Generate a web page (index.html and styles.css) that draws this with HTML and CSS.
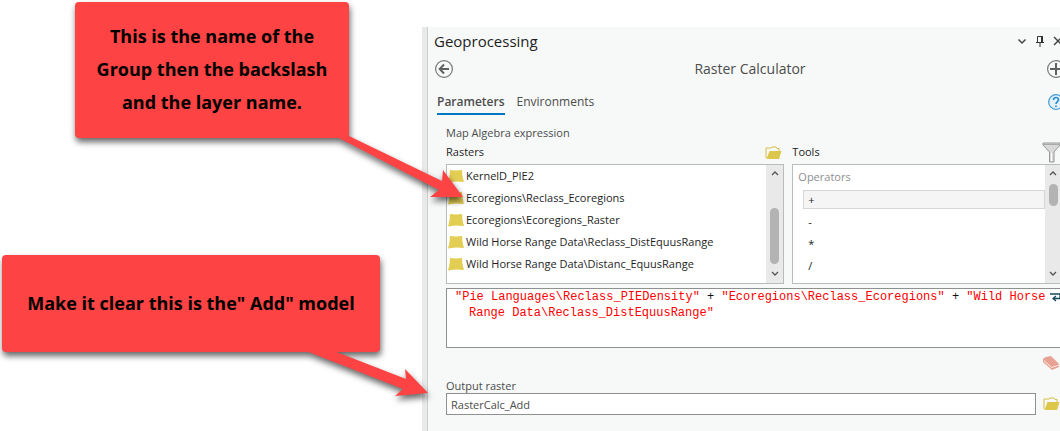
FILE: index.html
```html
<!DOCTYPE html>
<html lang="en">
<head>
<meta charset="utf-8">
<title>Geoprocessing - Raster Calculator</title>
<link rel="stylesheet" href="styles.css">
</head>
<body>
<main class="page">
  <section class="notes">
    <div class="note note-group">
      <svg class="arrow arrow-group" width="140" height="70" viewBox="0 0 140 70" aria-hidden="true"><path d="M5 6H19L112 51L113 40L133 67H100L109 60Z"/></svg>
      <p class="note-body">This is the name of the<br>Group then the backslash<br>and the layer name.</p>
    </div>
    <div class="note note-model">
      <svg class="arrow arrow-model" width="140" height="50" viewBox="0 0 140 50" aria-hidden="true"><path d="M0 0H28L100 28L99 18L122 42L89 45L97 38Z"/></svg>
      <p class="note-body">Make it clear this is the" Add" model</p>
    </div>
  </section>

  <section class="panel">
    <div class="pane">
      <header class="pane-head">
        <h1 class="pane-title">Geoprocessing</h1>
        <div class="window-tools">
          <button class="icon-btn" aria-label="Menu"><svg width="10" height="12" viewBox="0 0 10 12"><path d="M1.500 4.500L5 8L8.500 4.500" fill="none" stroke="#444" stroke-width="1.500"/></svg></button>
          <button class="icon-btn" aria-label="Pin"><svg width="10" height="12" viewBox="0 0 10 12"><path d="M2.500 7V1.500H7V7M1 7.500H9M5 8V12" fill="none" stroke="#333"/><path d="M6 1H8V7H6Z" fill="#333"/></svg></button>
          <button class="icon-btn" aria-label="Close"><svg width="10" height="12" viewBox="0 0 10 12"><path d="M1 2L9 10M9 2L1 10" stroke="#444" stroke-width="1.500"/></svg></button>
        </div>
      </header>

      <div class="tool-head">
        <button class="icon-btn" aria-label="Back"><svg width="18" height="18" viewBox="0 0 18 18"><circle cx="9" cy="9" r="8.400" fill="none" stroke="#777" stroke-width="1.200"/><path d="M14 9H5M9 4.500L4.700 9L9 13.500" fill="none" stroke="#606060" stroke-width="2"/></svg></button>
        <h2 class="tool-title">Raster Calculator</h2>
        <button class="icon-btn" aria-label="Add"><svg width="18" height="18" viewBox="0 0 18 18"><circle cx="9" cy="9" r="8.400" fill="none" stroke="#777" stroke-width="1.200"/><path d="M9 3V15M3 9H15" stroke="#606060" stroke-width="2"/></svg></button>
      </div>

      <nav class="tabs">
        <a class="tab tab-active" href="#parameters">Parameters</a>
        <a class="tab" href="#environments">Environments</a>
        <button class="icon-btn help" aria-label="Help"><svg width="16" height="16" viewBox="0 0 16 16"><circle cx="8" cy="8" r="7.300" fill="#e6f2fa" stroke="#3d9bd6" stroke-width="1.200"/><path d="M5.500 6Q5.500 3.500 8 3.500T10.500 5.800C10.500 7.500 8 7.700 8 10M8 11.500V13" fill="none" stroke="#2f90d0" stroke-width="1.700"/></svg></button>
      </nav>

      <div class="form" id="parameters">
        <h3 class="form-title">Map Algebra expression</h3>
        <div class="lists">
          <div class="list-block">
            <div class="list-head">
              <h4 class="list-title">Rasters</h4>
              <button class="icon-btn" aria-label="Browse rasters"><svg width="17" height="14" viewBox="0 0 17 14"><path d="M1 12V2H6L7 1H11L12 2.500H14V5" fill="none" stroke="#d6bd43"/><path d="M4.500 5H16.500L14 13H1.500Z" fill="#dcc64c"/></svg></button>
            </div>
            <div class="list">
              <ul class="rows">
                <li class="row"><svg width="16" height="14" viewBox="0 0 16 14"><path d="M2 1L8 1.500L14 1L14.500 7L16 13L8 12.500L0 13.500L1.500 7Z" fill="#e3ce54"/></svg>KernelD_PIE2</li>
                <li class="row"><svg width="16" height="14" viewBox="0 0 16 14"><path d="M2 1L8 1.500L14 1L14.500 7L16 13L8 12.500L0 13.500L1.500 7Z" fill="#e3ce54"/></svg>Ecoregions\Reclass_Ecoregions</li>
                <li class="row"><svg width="16" height="14" viewBox="0 0 16 14"><path d="M2 1L8 1.500L14 1L14.500 7L16 13L8 12.500L0 13.500L1.500 7Z" fill="#e3ce54"/></svg>Ecoregions\Ecoregions_Raster</li>
                <li class="row"><svg width="16" height="14" viewBox="0 0 16 14"><path d="M2 1L8 1.500L14 1L14.500 7L16 13L8 12.500L0 13.500L1.500 7Z" fill="#e3ce54"/></svg>Wild Horse Range Data\Reclass_DistEquusRange</li>
                <li class="row"><svg width="16" height="14" viewBox="0 0 16 14"><path d="M2 1L8 1.500L14 1L14.500 7L16 13L8 12.500L0 13.500L1.500 7Z" fill="#e3ce54"/></svg>Wild Horse Range Data\Distanc_EquusRange</li>
              </ul>
              <div class="scroll scroll-low">
                <svg width="8" height="6" viewBox="0 0 8 6"><path d="M1 5L4 2L7 5" fill="none" stroke="#555" stroke-width="1.300"/></svg>
                <span class="thumb"></span>
                <svg width="8" height="6" viewBox="0 0 8 6"><path d="M1 1L4 4L7 1" fill="none" stroke="#555" stroke-width="1.300"/></svg>
              </div>
            </div>
          </div>

          <div class="list-block">
            <div class="list-head">
              <h4 class="list-title">Tools</h4>
              <button class="icon-btn" aria-label="Filter tools"><svg width="19" height="21" viewBox="0 0 19 21"><path d="M1 1H18V3L12 10V20H7.500V10L1 3Z" fill="#d9d9d9" stroke="#999"/><path d="M1 2.500H18" stroke="#aaa"/><path d="M9.500 11V19" stroke="#fff"/></svg></button>
            </div>
            <div class="list">
              <div class="tools">
                <p class="tools-title">Operators</p>
                <ul class="ops">
                  <li class="op op-on">+</li>
                  <li class="op">-</li>
                  <li class="op">*</li>
                  <li class="op">/</li>
                </ul>
              </div>
              <div class="scroll scroll-high">
                <svg width="8" height="6" viewBox="0 0 8 6"><path d="M1 5L4 2L7 5" fill="none" stroke="#555" stroke-width="1.300"/></svg>
                <span class="thumb"></span>
                <svg width="8" height="6" viewBox="0 0 8 6"><path d="M1 1L4 4L7 1" fill="none" stroke="#555" stroke-width="1.300"/></svg>
              </div>
            </div>
          </div>
        </div>

        <div class="expression">
          <div class="code" role="textbox" aria-label="Expression" contenteditable="true"><div class="code-line"><span>"Pie Languages\Reclass_PIEDensity"</span> <span class="plus">+</span> <span>"Ecoregions\Reclass_Ecoregions"</span> <span class="plus">+</span> <span>"Wild Horse</span></div><div class="code-line code-wrap">Range Data\Reclass_DistEquusRange"</div></div>
          <button class="icon-btn" aria-label="Wrap"><svg width="12" height="10" viewBox="0 0 12 10"><path d="M0 2H10V6.500H3M6 4L3 6.500L6 9" fill="none" stroke="#17495a" stroke-width="1.300"/></svg></button>
        </div>
        <div class="clear">
          <button class="icon-btn" aria-label="Clear"><svg width="17" height="14" viewBox="0 0 17 14"><path d="M0 3Q1 1 8 0L16 8V11L9 14L0 6Z" fill="#e7a293"/><path d="M1 4.500L8.500 11.500L16 9" fill="none" stroke="#fff" stroke-width="0.800"/></svg></button>
        </div>
        <label class="out-label" for="out">Output raster</label>
        <div class="out-row">
          <input class="out" id="out" type="text" value="RasterCalc_Add">
          <button class="icon-btn" aria-label="Browse output"><svg width="17" height="14" viewBox="0 0 17 14"><path d="M1 12V2H6L7 1H11L12 2.500H14V5" fill="none" stroke="#d6bd43"/><path d="M4.500 5H16.500L14 13H1.500Z" fill="#dcc64c"/></svg></button>
        </div>
      </div>
    </div>
  </section>
</main>
</body>
</html>
```
FILE: styles.css
```css
* { box-sizing: border-box; }
body { margin: 0; background: #fff; font: 11px/16px "Open Sans", "Noto Sans", sans-serif; color: #1e1e1e; }
h1, h2, h3, h4, p, ul { margin: 0; padding: 0; font-weight: 400; }
ul { list-style: none; }
svg { display: block; flex: none; }
.page { display: flex; min-height: 100vh; overflow: hidden; }

.notes { flex: none; width: 422px; padding: 2px; display: flex; flex-direction: column; gap: 117px; z-index: 1; }
.note { position: relative; filter: drop-shadow(1px 4px 3px rgba(0, 0, 0, 0.6)); }
.note-group { margin: 0 71px 0 73px; }
.note-model { margin-right: 40px; }
.note-body { display: grid; place-content: center; border-radius: 4px; background: #fd4343; color: #000; text-align: center; font: 700 18px/33px "Open Sans", "Noto Sans", sans-serif; white-space: nowrap; }
.note-group .note-body { padding: 18px 0 19px; }
.note-model .note-body { padding: 32px 0; }
.arrow { position: absolute; fill: #fd4343; }
.arrow-group { left: 255px; top: 128px; }
.arrow-model { left: 304px; top: 96px; }

.panel { flex: 1; min-width: 0; margin-top: 27px; padding-left: 5px; background: #f7f9f8; box-shadow: inset 5px 0 #e9e9e9, inset 6px 0 #ccd0ce; }
.pane { margin-right: -7px; padding-left: 7px; }
.icon-btn { flex: none; padding: 0; border: 0; background: none; cursor: pointer; }

.pane-head { display: flex; justify-content: space-between; align-items: center; height: 28px; }
.pane-title { font-size: 15px; line-height: 20px; }
.window-tools { display: flex; gap: 8px; padding-right: 4px; }
.tool-head { display: flex; justify-content: space-between; align-items: center; height: 28px; padding: 0 2px 0 1px; }
.tool-title { font-size: 14px; line-height: 20px; color: #4c4c4c; }
.tabs { display: flex; align-items: flex-start; gap: 12px; margin-top: 10px; padding: 0 3px; }
.tab { padding-bottom: 2px; font-size: 12px; line-height: 18px; color: #4c4c4c; text-decoration: none; border-bottom: 2px solid transparent; }
.tab-active { font-weight: 600; border-color: #0079c1; }
.help { margin-left: auto; padding-top: 1px; }

.form { padding: 10px 4px 0 12px; }
.form-title { font-size: 11px; color: #4c4c4c; }
.lists { display: grid; grid-template-columns: 5fr 4fr; gap: 8px; }
.list-block { min-width: 0; }
.list-head { display: flex; justify-content: space-between; align-items: center; height: 23px; padding-right: 2px; }
.list-title { font-size: 11px; line-height: 14px; padding-bottom: 2px; }
.list { display: flex; height: 120px; border: 1px solid #b9bcbb; background: #fff; }
.rows, .tools { flex: 1; min-width: 0; }
.row { display: flex; align-items: center; gap: 2px; height: 22px; padding-left: 1px; white-space: nowrap; }
.scroll { display: flex; flex-direction: column; align-items: center; width: 17px; padding: 5px 0 6px; background: #e9e9e9; }
.thumb { width: 9px; border-radius: 5px; background: #b3b3b3; }
.scroll-low .thumb { height: 56px; margin: auto 0 7px; }
.scroll-high .thumb { height: 22px; margin: 8px 0 auto; }
.tools-title { padding: 4px 0 5px 5px; color: #8f8f8f; }
.ops { display: grid; gap: 3px; padding-left: 10px; }
.op { height: 19px; padding-left: 4px; line-height: 17px; border: 1px solid transparent; }
.op-on { background: #f5f5f5; border-color: #d6d6d6; }

.expression { display: flex; align-items: flex-start; min-height: 60px; margin-top: 4px; border: 1px solid #8d9290; padding-left: 8px; background: #fff; }
.expression .icon-btn { padding-top: 3px; }
.code { flex: 1; min-width: 0; color: #f00; font: 12px/16px "Liberation Mono", monospace; white-space: nowrap; outline: none; }
.code-wrap { padding-left: 14px; }
.plus { color: #111; }
.clear { display: flex; justify-content: flex-end; padding: 8px 3px 0 0; }
.out-label { display: block; margin-top: 8px; line-height: 15px; color: #4c4c4c; }
.out-row { display: flex; align-items: center; gap: 7px; padding-right: 3px; }
.out { flex: 1; min-width: 0; height: 22px; padding: 0 4px; border: 1px solid #8d9290; background: #fff; color: #4c4c4c; font: inherit; }
```
